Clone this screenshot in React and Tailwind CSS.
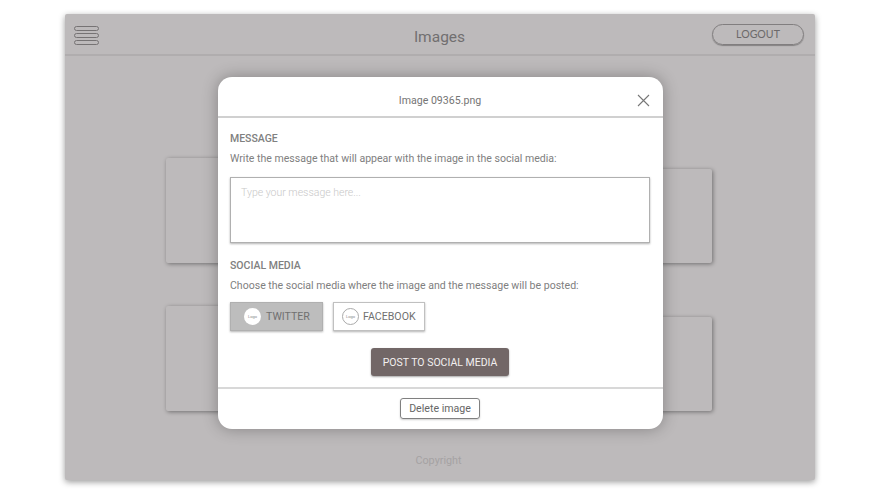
export default function App() {
  return (
    <div className="relative w-[880px] h-[495px] bg-white overflow-hidden font-['Roboto',sans-serif]">
      <div className="absolute left-[65px] top-[14px] w-[750px] h-[466px] flex flex-col bg-[#bdbabb] rounded-[2px] shadow-[0_2px_6px_rgba(0,0,0,0.4)]">
        <header className="h-[42px] shrink-0 relative flex items-center justify-between pl-[9px] pr-[11px] border-b-2 border-[#b0adae]">
          <div className="flex flex-col gap-[2px] pt-[2px]">
            <span className="block w-[25px] h-[5px] rounded-full border border-[#767374]" />
            <span className="block w-[25px] h-[5px] rounded-full border border-[#767374]" />
            <span className="block w-[25px] h-[5px] rounded-full border border-[#767374]" />
          </div>
          <h1 className="text-[15.5px] font-normal text-[#716f70] ml-[25px] pt-[7px] pl-[43px]">Images</h1>
          <button className="w-[92px] h-[21px] mt-[1px] rounded-full border border-[#817e7f] shadow-[0_1px_1px_rgba(0,0,0,0.3)] text-[10.6px] font-['Lato',sans-serif] text-[#6c696a] flex items-center justify-center pt-[1px]">LOGOUT</button>
        </header>
        <main className="flex-1 pt-[102px] pl-[101px] pr-[103px] grid grid-cols-2 gap-x-5 gap-y-[43px] content-start">
          <div className="h-[105px] self-end bg-[#bdbabb] rounded-[2px] shadow-[1px_1px_4px_rgba(0,0,0,0.4)]" />
          <div className="h-[94px] self-end bg-[#bdbabb] rounded-[2px] shadow-[1px_1px_4px_rgba(0,0,0,0.4)]" />
          <div className="h-[105px] self-end bg-[#bdbabb] rounded-[2px] shadow-[1px_1px_4px_rgba(0,0,0,0.4)]" />
          <div className="h-[94px] self-end bg-[#bdbabb] rounded-[2px] shadow-[1px_1px_4px_rgba(0,0,0,0.4)]" />
        </main>
        <footer className="h-[38px] shrink-0 flex items-center justify-center text-[10.8px] text-[#a5a2a3] pt-[1px] pr-[3px]">Copyright</footer>
      </div>

      <div className="absolute left-[218px] top-[77px] w-[445px] h-[352px] bg-white rounded-[14px] shadow-[0_0_16px_rgba(0,0,0,0.3)] flex flex-col">
        <div className="h-[41px] shrink-0 relative flex items-center justify-center border-b-2 border-[#d0d0d0] text-[10.6px] text-[#757575] pt-[9px] pr-[1px]">
          Image 09365.png
          <svg className="absolute right-[13px] top-[17px]" width="13" height="13" viewBox="0 0 13 13" fill="none" stroke="#777" strokeWidth="1.1">
            <path d="M1 1 L12 12 M12 1 L1 12" />
          </svg>
        </div>
        <div className="flex-1 px-[12px] pt-[14px]">
          <div className="text-[10.5px] font-medium text-[#808080] leading-[13px]">MESSAGE</div>
          <div className="text-[10.55px] text-[#808080] leading-[13px] mt-[7px]">Write the message that will appear with the image in the social media:</div>
          <div className="mt-[12px] w-[420px] h-[66px] border border-[#b0b0b0] shadow-[0_1px_2px_rgba(0,0,0,0.3)] px-[10px] pt-[8px] text-[10.5px] leading-[13px] font-light text-[#c8c8c8]">Type your message here...</div>
          <div className="text-[10.5px] font-medium text-[#808080] leading-[13px] mt-[16px]">SOCIAL MEDIA</div>
          <div className="text-[10.55px] text-[#808080] leading-[13px] mt-[7px]">Choose the social media where the image and the message will be posted:</div>
          <div className="flex gap-[10px] mt-[10px]">
            <button className="w-[93px] h-[29px] bg-[#bdbdbd] border border-[#b0b0b0] shadow-[0_1px_2px_rgba(0,0,0,0.3)] flex items-center pl-[13px] gap-[5px] text-[10.6px] text-[#707070]">
              <span className="w-[17px] h-[17px] rounded-full bg-white flex items-center justify-center text-[4px] text-[#888]">Logo</span>
              TWITTER
            </button>
            <button className="w-[92px] h-[29px] bg-white border border-[#c0c0c0] shadow-[0_1px_2px_rgba(0,0,0,0.3)] flex items-center pl-[8px] gap-[4px] text-[10.6px] text-[#707070]">
              <span className="w-[17px] h-[17px] rounded-full bg-white border border-[#aaa] flex items-center justify-center text-[4px] text-[#888]">Logo</span>
              FACEBOOK
            </button>
          </div>
          <div className="flex justify-center mt-[17px] pr-[1px]">
            <button className="w-[138px] h-[28px] rounded-[3px] bg-[#726767] text-[#f2f0f0] text-[10.5px] pt-[1px] shadow-[0_1px_2px_rgba(0,0,0,0.35)]">POST TO SOCIAL MEDIA</button>
          </div>
        </div>
        <div className="h-[42px] shrink-0 flex justify-center pt-[9px] pr-[1px] border-t-2 border-[#d8d8d8]">
          <button className="w-[80px] h-[21px] rounded-[3px] border border-[#808080] shadow-[0_1px_2px_rgba(0,0,0,0.2)] text-[10.6px] text-[#666]">Delete image</button>
        </div>
      </div>
    </div>
  );
}
